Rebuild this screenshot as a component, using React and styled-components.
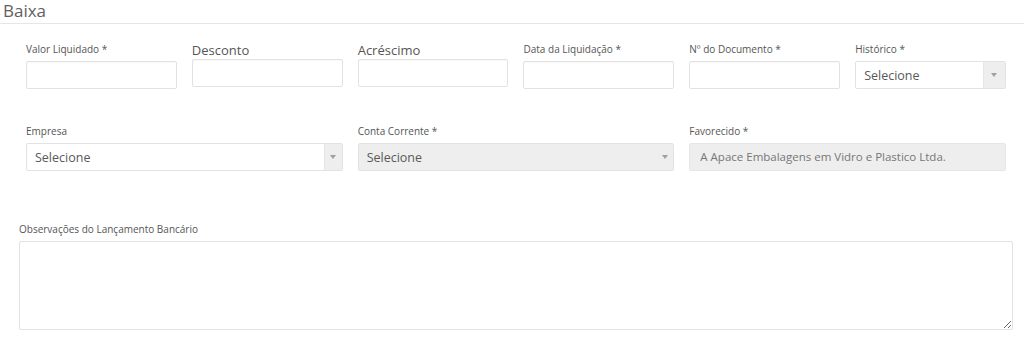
import React from "react";
import styled, { createGlobalStyle } from "styled-components";

const GlobalStyle = createGlobalStyle`
  html, body {
    margin: 0;
    padding: 0;
    background: #fff;
  }
  body {
    font-family: "Open Sans", "Liberation Sans", Arial, sans-serif;
    color: #555;
  }
`;

const Page = styled.div`
  width: 1024px;
  height: 338px;
  overflow: hidden;
  background: #fff;
`;

const Heading = styled.h3`
  margin: 0;
  height: 23px;
  line-height: 22px;
  padding-left: 3px;
  font-size: 17px;
  font-weight: 400;
  color: #606060;
  border-bottom: 1px solid #e6e6e6;
`;

const FormGrid = styled.div`
  display: grid;
  grid-template-columns: repeat(6, 1fr);
  column-gap: 15px;
  align-items: start;
  padding: ${(p) => p.$top}px 18px 0 26px;
`;

const Field = styled.div`
  display: flex;
  flex-direction: column;
  grid-column: span ${(p) => p.$span || 1};
`;

const Label = styled.label`
  display: block;
  font-size: ${(p) => (p.$big ? "13px" : "10px")};
  line-height: ${(p) => (p.$big ? "18px" : "14px")};
  margin: ${(p) => (p.$big ? "0" : "1px 0 5px")};
  color: #555;
  white-space: nowrap;
`;

const TextInput = styled.input`
  box-sizing: border-box;
  width: 100%;
  height: 28px;
  margin: 0;
  padding: 0 8px;
  border: 1px solid #e2e2e2;
  border-radius: 2px;
  box-shadow: inset 0 1px 1px rgba(0, 0, 0, 0.03);
  background: #fff;
  font-family: inherit;
  font-size: 12px;
  color: #555;
  outline: none;
`;

const SelectBox = styled.div`
  box-sizing: border-box;
  display: flex;
  height: 28px;
  border: 1px solid #e2e2e2;
  border-radius: 2px;
  background: ${(p) => (p.$disabled ? "#eeeeee" : "#fff")};
  overflow: hidden;
`;

const SelectValue = styled.div`
  flex: 1;
  padding-left: 8px;
  font-size: 12.5px;
  line-height: 27px;
  color: #595959;
  white-space: nowrap;
  overflow: hidden;
`;

const ArrowZone = styled.div`
  width: ${(p) => p.$w || 19}px;
  display: flex;
  align-items: center;
  justify-content: center;
  background: #eeeeee;
  border-left: 1px solid ${(p) => (p.$disabled ? "#eeeeee" : "#e6e6e6")};
`;

const Caret = styled.span`
  width: 0;
  height: 0;
  border-left: 3px solid transparent;
  border-right: 3px solid transparent;
  border-top: 4px solid #a0a0a0;
`;

const ReadOnly = styled.div`
  box-sizing: border-box;
  height: 28px;
  padding-left: 10px;
  border: 1px solid #e6e6e6;
  border-radius: 2px;
  background: #eeeeee;
  font-size: 11.5px;
  line-height: 26px;
  color: #777;
  white-space: nowrap;
`;

const NotesBlock = styled.div`
  display: flex;
  flex-direction: column;
  padding: 50px 11px 0 19px;
`;

const Notes = styled.textarea`
  box-sizing: border-box;
  width: 100%;
  height: 89px;
  margin: 0;
  border: 1px solid #e2e2e2;
  border-radius: 2px;
  background: #fff;
  font-family: inherit;
  font-size: 12px;
  outline: none;
  resize: both;
`;

function Select({ value, disabled, arrowWidth }) {
  return (
    <SelectBox $disabled={disabled}>
      <SelectValue>{value}</SelectValue>
      <ArrowZone $w={arrowWidth} $disabled={disabled}>
        <Caret />
      </ArrowZone>
    </SelectBox>
  );
}

export default function App() {
  return (
    <Page>
      <GlobalStyle />
      <Heading>Baixa</Heading>

      <FormGrid $top={17}>
        <Field>
          <Label>Valor Liquidado *</Label>
          <TextInput />
        </Field>
        <Field>
          <Label $big>Desconto</Label>
          <TextInput />
        </Field>
        <Field>
          <Label $big>Acréscimo</Label>
          <TextInput />
        </Field>
        <Field>
          <Label>Data da Liquidação *</Label>
          <TextInput />
        </Field>
        <Field>
          <Label>Nº do Documento *</Label>
          <TextInput />
        </Field>
        <Field>
          <Label>Histórico *</Label>
          <Select value="Selecione" arrowWidth={21} />
        </Field>
      </FormGrid>

      <FormGrid $top={34}>
        <Field $span={2}>
          <Label>Empresa</Label>
          <Select value="Selecione" arrowWidth={17} />
        </Field>
        <Field $span={2}>
          <Label>Conta Corrente *</Label>
          <Select value="Selecione" disabled arrowWidth={17} />
        </Field>
        <Field $span={2}>
          <Label>Favorecido *</Label>
          <ReadOnly>A Apace Embalagens em Vidro e Plastico Ltda.</ReadOnly>
        </Field>
      </FormGrid>

      <NotesBlock>
        <Label>Observações do Lançamento Bancário</Label>
        <Notes />
      </NotesBlock>
    </Page>
  );
}
